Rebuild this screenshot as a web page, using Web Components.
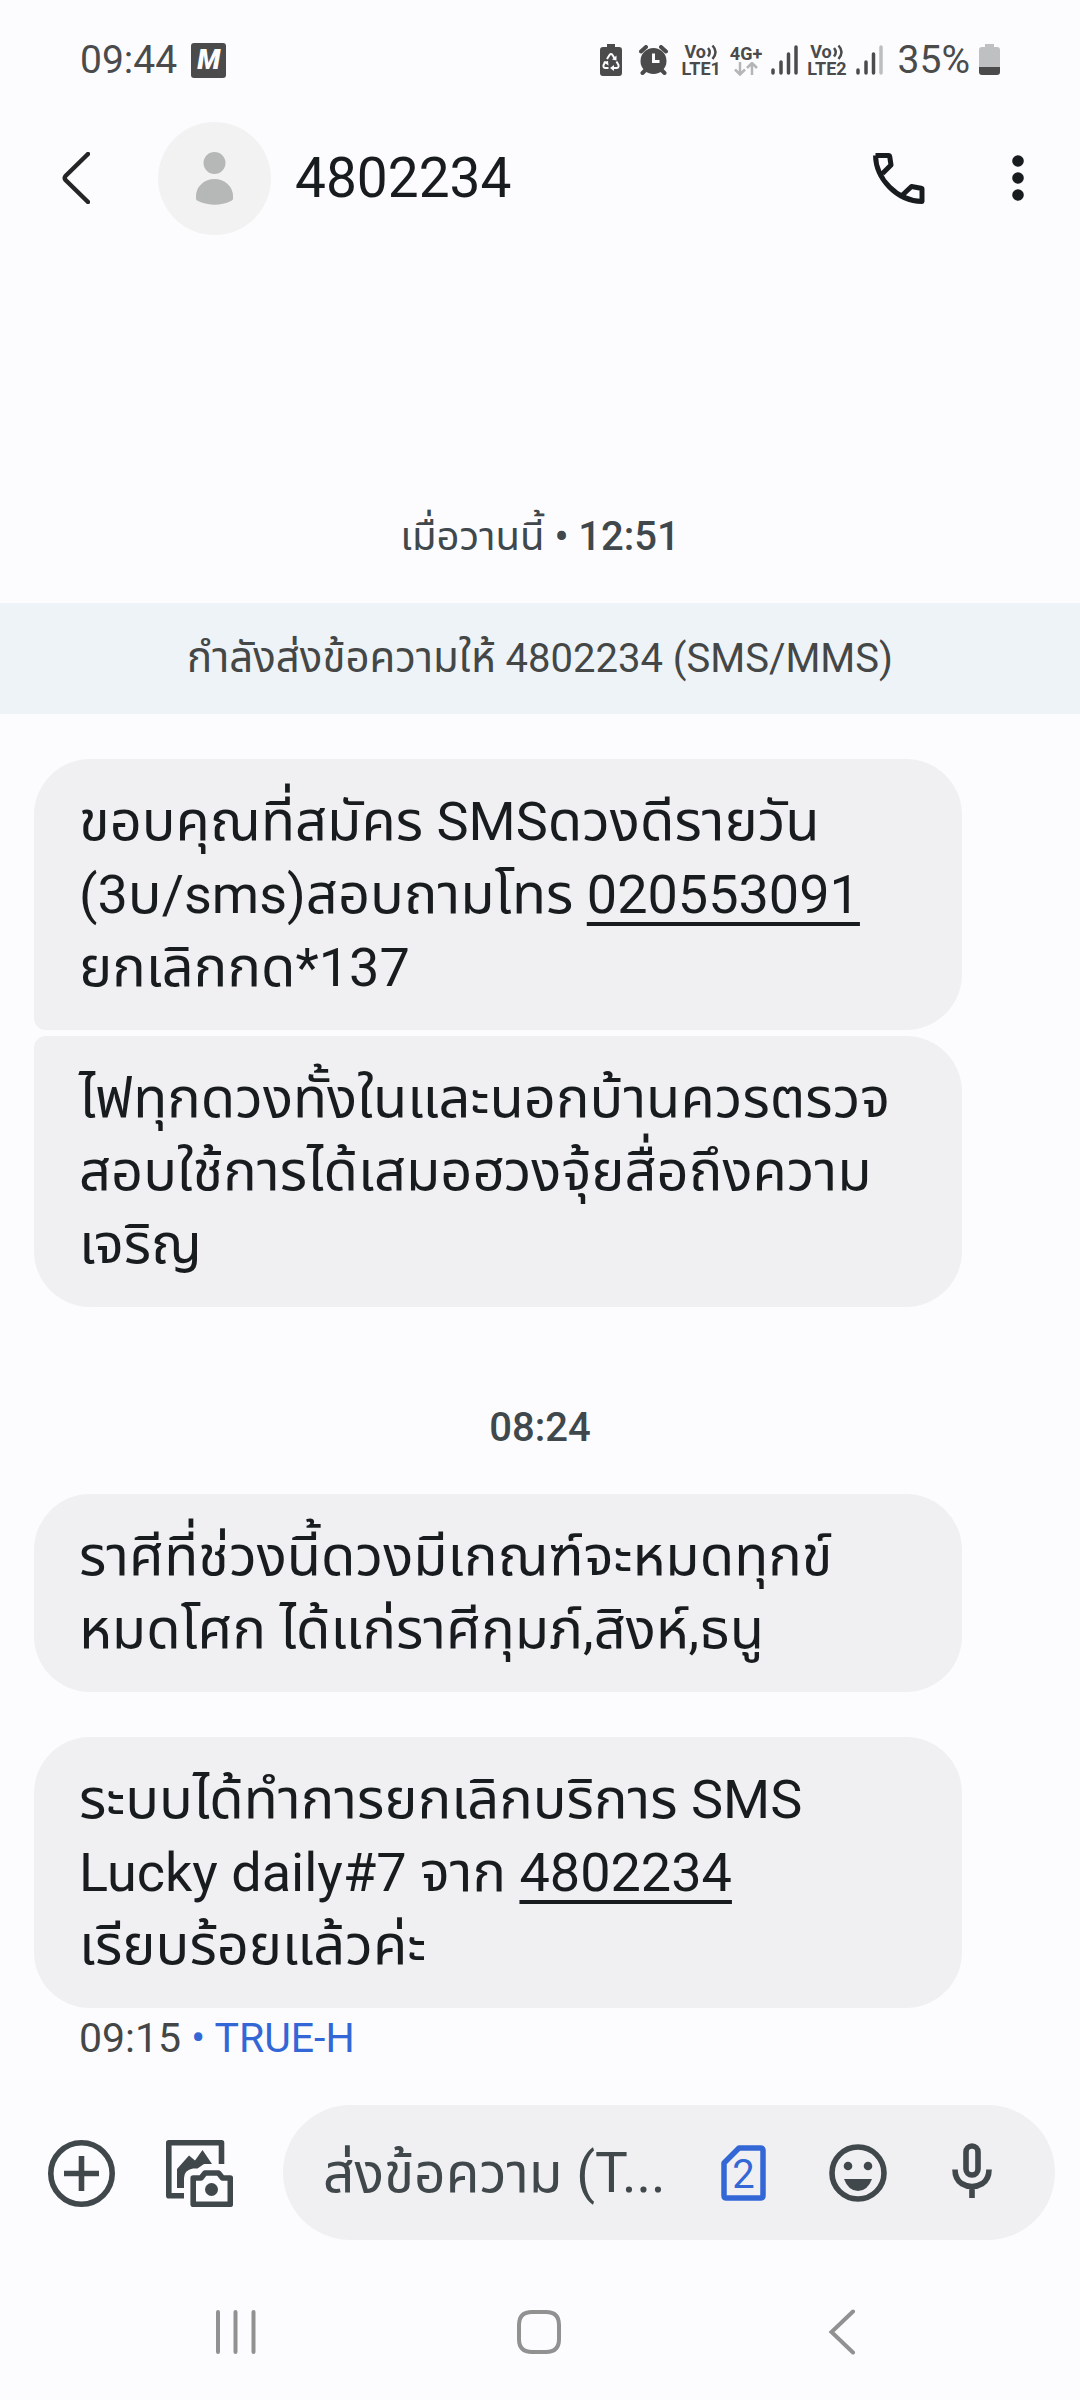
<!DOCTYPE html>
<html lang="th">
<head>
<meta charset="utf-8">
<meta name="viewport" content="width=device-width, initial-scale=1">
<title>4802234</title>
<style>
  html, body { margin: 0; padding: 0; }
  body {
    min-height: 100vh;
    background: #fcfcff;
    color: #191c1e;
    font-family: Roboto, "Noto Sans Thai", "Noto Sans", sans-serif;
  }
</style>
</head>
<body>
<sms-app></sms-app>

<script>
const define = (name, html, setup) => {
  const template = document.createElement('template');
  template.innerHTML = html;
  customElements.define(name, class extends HTMLElement {
    connectedCallback() {
      if (this.shadowRoot) return;
      this.attachShadow({ mode: 'open' }).append(template.content.cloneNode(true));
      if (setup) setup(this, this.shadowRoot);
    }
  });
};

/* Wraps each run of Thai script in a span, so that it can take its own size beside Latin text. */
const wrapThai = host => {
  for (const node of [...host.childNodes]) {
    if (node.nodeType !== Node.TEXT_NODE) continue;
    const parts = node.data.split(/([\u0e00-\u0e7f]+)/).filter(Boolean).map(part => {
      if (!/[\u0e00-\u0e7f]/.test(part)) return part;
      const span = document.createElement('span');
      span.className = 'thai';
      span.textContent = part;
      return span;
    });
    node.replaceWith(...parts);
  }
};

/* Icons: [width, height, markup] */
const ICONS = {
  eco: [30, 33, `<path d="M7 0h8v3h4q3 0 3 3v23q0 3-3 3H3q-3 0-3-3V6q0-3 3-3h4z" fill="currentColor"/>
    <path d="M7 15L9.500 11Q11 9 12.500 11L15 15M16.500 17.500L18.500 21Q19 24 16.500 24H13.500M8.500 24H5.500Q3 24 3.500 21L5.500 17.500" fill="none" stroke="#fcfcff" stroke-width="2"/>
    <path d="M16.500 11.500V16.500L12 15.500ZM14 21v6l-4-3zM3 18l5-1 .5 4.500z" fill="#fcfcff"/>`],
  alarm: [34, 30, `<circle cx="14.500" cy="16" r="13" fill="currentColor"/>
    <path d="M2 6.500L7 2M27 6.500L22 2M6.500 25L3.500 28M22.500 25L25.500 28" fill="none" stroke="currentColor" stroke-width="4" stroke-linecap="round"/>
    <path d="M14.500 8.500V16.500H20.500" fill="none" stroke="#fcfcff" stroke-width="3"/>`],
  waves: [12, 16, `<path d="M2 4q3.500 4 0 8.500M6.500 1.500q6 6.500 0 13.500" fill="none" stroke="currentColor" stroke-width="2.500"/>`],
  arrows: [24, 14, `<path d="M6 0v12M1 7.500l5 5 5-5M18 13V1M13 6l5-5 5 5" fill="none" stroke="#b4b5b6" stroke-width="2.500"/>`],
  signal: [27, 30, `<path d="M2 25v3M10 17v11M17.500 9v19M25 2v26" fill="none" stroke="currentColor" stroke-width="3.500" stroke-linecap="round"/>`],
  signalweak: [33, 30, `<path d="M2 25v3M10 17v11M17.500 9v19" fill="none" stroke="currentColor" stroke-width="3.500" stroke-linecap="round"/><path d="M25 2v26" stroke="#bdbebf" stroke-width="3.500" stroke-linecap="round"/>`],
  battery: [21, 32, `<path d="M6 0h9v3h3q3 0 3 3v17H0V6q0-3 3-3h3z" fill="#bfc0c1"/><path d="M0 23h21v5q0 3-3 3H3q-3 0-3-3z" fill="currentColor"/>`],
  back: [28, 52, `<path d="M26 2L3.500 24Q2 26 3.500 28L26 50" fill="none" stroke="#252525" stroke-width="4.500" stroke-linecap="round" stroke-linejoin="round"/>`],
  person: [113, 113, `<circle cx="56.500" cy="56.500" r="56.500" fill="#f2f2f2"/><circle cx="56.500" cy="41" r="11" fill="#b6b8b8"/>
    <path d="M38 77v-3a18.500 17 0 0 1 37 0v3q0 1-2 2-16 7.500-33 0-2-1-2-2z" fill="#b6b8b8"/>`],
  call: [52, 51, `<path d="M2.500 2.500H15.500Q16.500 2.500 16.700 3.500L18 12 9.500 20.500M2.500 2.500C3 26 24 48 49 48.500V36Q49 35.500 48 35.300L38.500 33.500 29.500 42" fill="none" stroke="#191c1e" stroke-width="5" stroke-linejoin="round"/>`],
  more: [12, 46, `<g fill="#191c1e"><circle cx="6" cy="6" r="5.800"/><circle cx="6" cy="23" r="5.800"/><circle cx="6" cy="40" r="5.800"/></g>`],
  plus: [67, 67, `<g fill="none" stroke="currentColor" stroke-width="5.600"><circle cx="33.500" cy="33.500" r="30.700"/><path d="M33.500 16v35M16 33.500h35"/></g>`],
  gallery: [67, 67, `<g fill="none" stroke="currentColor" stroke-width="5.600" stroke-linejoin="round"><path d="M55.500 24V2.800H2.800V55.800H18"/><path d="M64.300 41V64.200H27.200V38H35L39 33H52.500L56.500 38H64.300Z"/></g>
    <path d="M11 48V29L23 15.500 29 20.500 36.500 10 46 24H38L31.500 28.500H27Q18 30 18 38V48Z" fill="currentColor"/><circle cx="45.500" cy="49.500" r="6.500" fill="currentColor"/>`],
  sim: [46, 56, `<path d="M18 3H39.500Q42 3 42 5.500V50.500Q42 53 39.500 53H5.500Q3 53 3 50.500V18Z" fill="none" stroke="#3367d6" stroke-width="5.500" stroke-linejoin="round"/>
    <text x="22.500" y="43" text-anchor="middle" font-size="40" font-weight="400" fill="#3367d6">2</text>`],
  emoji: [58, 58, `<circle cx="29" cy="29" r="26" fill="none" stroke="currentColor" stroke-width="5.600"/><circle cx="19" cy="22" r="4.300" fill="currentColor"/><circle cx="39" cy="22" r="4.300" fill="currentColor"/><path d="M15 35H43Q38.500 47 29 47T15 35Z" fill="currentColor"/>`],
  mic: [40, 60, `<g fill="none" stroke="currentColor" stroke-width="5.600"><rect x="14" y="3" width="12" height="29" rx="6"/><path d="M3 26.500Q3 36 9.500 40.500 14.500 43.500 20 43.500T30.500 40.500Q37 36 37 26.500M20 43V55"/></g>`],
  recents: [42, 44, `<path d="M3 2v40M20.500 2v40M38.500 2v40" fill="none" stroke="currentColor" stroke-width="4" stroke-linecap="round"/>`],
  home: [44, 44, `<path d="M15 2H29Q42 2 42 15V29Q42 42 29 42H15Q2 42 2 29V15Q2 2 15 2Z" fill="none" stroke="currentColor" stroke-width="4"/>`],
  navback: [28, 46, `<path d="M25 2.500L3.500 23 25 43.500" fill="none" stroke="currentColor" stroke-width="4" stroke-linecap="round" stroke-linejoin="miter"/>`]
};

define('ui-icon', `
  <style>:host{display:block;flex:none} svg{display:block;font-family:inherit}</style>
`, (host, root) => {
  const [w, h, body] = ICONS[host.getAttribute('name')];
  root.innerHTML += `<svg width="${w}" height="${h}" viewBox="0 0 ${w} ${h}" aria-hidden="true">${body}</svg>`;
});

define('icon-button', `
  <style>
    :host{display:block;flex:none}
    button{display:flex;align-items:center;justify-content:center;width:100%;height:100%;padding:0;border:0;background:none;color:inherit;font:inherit;cursor:pointer}
  </style>
  <button type="button"><slot></slot></button>
`, (host, root) => root.querySelector('button').setAttribute('aria-label', host.getAttribute('label')));

define('network-badge', `
  <style>
    :host{display:flex;flex-direction:column;flex:none;font-size:18px;line-height:17px;font-weight:700}
    .top{display:flex;align-items:center;justify-content:center;height:17px}
  </style>
  <div class="top"><slot name="top"></slot></div>
  <div><slot></slot></div>
`);

define('status-bar', `
  <style>
    :host{display:flex;align-items:center;justify-content:space-between;height:120px;padding:0 80px;color:#4b4b4b;font-size:39px;line-height:40px}
    .left,.right{display:flex;align-items:center}
    .left{gap:14px}
    .right{gap:9px}
    .app{display:flex;align-items:center;justify-content:center;width:35px;height:35px;border-radius:3px;background:#4b4b4b;color:#fcfcff;font-size:27px;font-weight:900;font-style:italic}
    .arrows{display:flex;justify-content:center}
    .percent{font-size:40px}
  </style>
  <div class="left"><span>09:44</span><span class="app">M</span></div>
  <div class="right">
    <ui-icon name="eco"></ui-icon>
    <ui-icon name="alarm"></ui-icon>
    <network-badge><span slot="top">Vo</span><ui-icon slot="top" name="waves"></ui-icon>LTE1</network-badge>
    <network-badge><span slot="top">4G+</span><span class="arrows"><ui-icon name="arrows"></ui-icon></span></network-badge>
    <ui-icon name="signal"></ui-icon>
    <network-badge><span slot="top">Vo</span><ui-icon slot="top" name="waves"></ui-icon>LTE2</network-badge>
    <ui-icon name="signalweak"></ui-icon>
    <span>35%</span>
    <ui-icon name="battery"></ui-icon>
  </div>
`);

define('chat-header', `
  <style>
    :host{display:flex;align-items:center;height:116px;padding:0 38px}
    .back{width:76px;height:76px}
    .avatar{margin-left:44px}
    h1{flex:1;margin:0 0 0 24px;font-size:55px;line-height:64px;font-weight:400}
    .call{width:76px;height:76px}
    .more{width:48px;height:76px;margin-left:57px}
  </style>
  <icon-button class="back" label="กลับ"><ui-icon name="back"></ui-icon></icon-button>
  <ui-icon class="avatar" name="person"></ui-icon>
  <h1><slot></slot></h1>
  <icon-button class="call" label="โทร"><ui-icon name="call"></ui-icon></icon-button>
  <icon-button class="more" label="ตัวเลือกเพิ่มเติม"><ui-icon name="more"></ui-icon></icon-button>
`);

define('time-label', `
  <style>
    :host{display:block;text-align:center;color:#40484c;font-size:40px;line-height:60px;font-weight:500;margin-bottom:36px}
    ::slotted(.thai){font-weight:400}
  </style>
  <slot></slot>
`, wrapThai);

define('chat-banner', `
  <style>
    :host{display:block;padding:26px 0;background:#eef3f7;color:#444746;text-align:center;font-size:40px;line-height:59px;margin-bottom:45px}
    ::slotted(.thai){font-size:42px;line-height:42px}
  </style>
  <slot></slot>
`, wrapThai);

define('chat-bubble', `
  <style>
    :host{display:block;margin:0 118px 0 34px;padding:26px 45px;border-radius:56px;background:#f0f0f2;font-size:54px;line-height:73px}
    :host([group=first]){border-bottom-left-radius:12px}
    :host([group=last]){border-top-left-radius:12px;margin-top:6px}
    ::slotted(.thai){font-size:56px;line-height:56px}
    ::slotted(a){color:inherit;text-decoration:underline;text-decoration-thickness:4px;text-underline-offset:9px;text-decoration-skip-ink:none}
  </style>
  <slot></slot>
`, wrapThai);

define('message-meta', `
  <style>
    :host{display:block;margin-top:2px;padding:0 79px;color:#444746;font-size:41px;line-height:56px}
    span{color:#3367d6}
  </style>
  <slot></slot> <span>• <slot name="sim"></slot></span>
`);

define('message-composer', `
  <style>
    :host{display:flex;align-items:center;padding:39px 25px 24px 34px;color:#40484c}
    .act{width:95px;height:95px;padding-top:2px}
    .act + .act{margin-left:23px}
    .field{display:flex;align-items:center;flex:1;min-width:0;height:135px;margin-left:36px;padding:0 40px;box-sizing:border-box;border-radius:68px;background:#f0f0f2}
    input{flex:1;min-width:0;height:100px;padding:0;border:0;outline:0;background:none;color:inherit;font:inherit;font-size:55px}
    input::placeholder{color:#40484c;opacity:1}
    .in{width:86px;height:96px;margin-left:28px}
  </style>
  <icon-button class="act" label="เพิ่ม"><ui-icon name="plus"></ui-icon></icon-button>
  <icon-button class="act" label="แกลเลอรี"><ui-icon name="gallery"></ui-icon></icon-button>
  <div class="field">
    <input type="text" aria-label="ส่งข้อความ" placeholder="ส่งข้อความ (T...">
    <icon-button class="in" label="ซิม 2"><ui-icon name="sim"></ui-icon></icon-button>
    <icon-button class="in" label="อีโมจิ"><ui-icon name="emoji"></ui-icon></icon-button>
    <icon-button class="in" label="บันทึกเสียง"><ui-icon name="mic"></ui-icon></icon-button>
  </div>
`);

define('nav-bar', `
  <style>
    :host{display:flex;align-items:center;justify-content:space-between;height:136px;padding:0 188px 0 186px;color:#919191}
    icon-button{width:100px;height:100px}
  </style>
  <icon-button label="ล่าสุด"><ui-icon name="recents"></ui-icon></icon-button>
  <icon-button label="หน้าแรก"><ui-icon name="home"></ui-icon></icon-button>
  <icon-button label="ย้อนกลับ"><ui-icon name="navback"></ui-icon></icon-button>
`);

define('sms-app', `
  <style>
    :host{display:flex;flex-direction:column;min-height:100vh}
    main{display:flex;flex-direction:column;flex:1;justify-content:flex-end}
    .later{margin-top:91px}
    .spaced{margin-top:45px}
  </style>
  <status-bar></status-bar>
  <chat-header>4802234</chat-header>
  <main>
    <time-label>เมื่อวานนี้ • 12:51</time-label>
    <chat-banner>กำลังส่งข้อความให้ 4802234 (SMS/MMS)</chat-banner>
    <chat-bubble group="first">ขอบคุณที่สมัคร SMSดวงดีรายวัน<br>(3บ/sms)สอบถามโทร <a href="tel:020553091">020553091</a><br>ยกเลิกกด*137</chat-bubble>
    <chat-bubble group="last">ไฟทุกดวงทั้งในและนอกบ้านควรตรวจ<br>สอบใช้การได้เสมอฮวงจุ้ยสื่อถึงความ<br>เจริญ</chat-bubble>
    <time-label class="later">08:24</time-label>
    <chat-bubble>ราศีที่ช่วงนี้ดวงมีเกณฑ์จะหมดทุกข์<br>หมดโศก ได้แก่ราศีกุมภ์,สิงห์,ธนู</chat-bubble>
    <chat-bubble class="spaced">ระบบได้ทำการยกเลิกบริการ SMS<br>Lucky daily#7 จาก <a href="tel:4802234">4802234</a><br>เรียบร้อยแล้วค่ะ</chat-bubble>
    <message-meta>09:15<span slot="sim">TRUE-H</span></message-meta>
  </main>
  <message-composer></message-composer>
  <nav-bar></nav-bar>
`);
</script>
</body>
</html>
